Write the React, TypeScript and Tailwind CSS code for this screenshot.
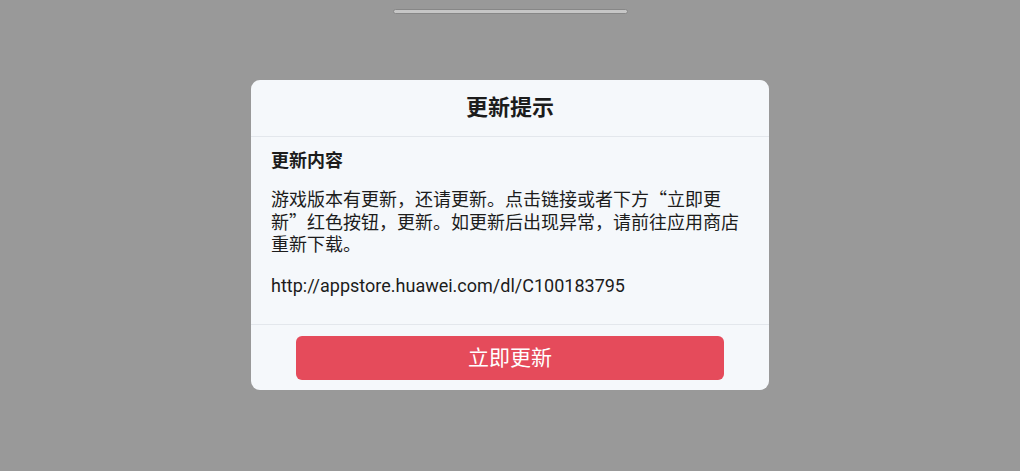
import React from 'react';

const FONT = '"Roboto", "Noto Sans CJK SC", "Noto Sans", sans-serif';
const CJK = '"Noto Sans CJK SC", "Roboto", sans-serif';

const UpdateDialog: React.FC = () => {
  return (
    <div className="w-[518px] rounded-[9px] bg-[#f5f8fb] overflow-hidden">
      {/* Header */}
      <div className="h-[57px] flex items-center justify-center border-b border-[#e3e7ec]">
        <h2 className="text-[22px] font-bold text-[#1c1c1c] leading-none">更新提示</h2>
      </div>

      {/* Body */}
      <div className="px-5 pt-[12px] pb-[27px] border-b border-[#e3e7ec] text-[#1c1c1c]">
        <h3 className="text-[18px] font-bold leading-[23px]">更新内容</h3>
        <p className="mt-[15px] text-[18px] leading-[22.5px]" style={{ fontFamily: CJK }}>
          游戏版本有更新，还请更新。点击链接或者下方“立即更新”红色按钮，更新。如更新后出现异常，请前往应用商店重新下载。
        </p>
        <p className="mt-[20px] text-[18px] leading-[22.5px]">http://appstore.huawei.com/dl/C100183795</p>
      </div>

      {/* Footer */}
      <div className="pt-[11px] pb-[10px] flex justify-center">
        <button className="w-[428px] h-[44px] rounded-[6px] bg-[#e54b5b] text-white text-[21px] leading-none">
          立即更新
        </button>
      </div>
    </div>
  );
};

const App: React.FC = () => {
  return (
    <div className="w-[1020px] h-[471px] bg-[#999999] flex flex-col items-center" style={{ fontFamily: FONT }}>
      <div className="mt-[9px] w-[235px] h-[5px] rounded-full bg-[#c6c6c6] border border-[#878787]" />
      <div className="mt-[66px]">
        <UpdateDialog />
      </div>
    </div>
  );
};

export default App;
